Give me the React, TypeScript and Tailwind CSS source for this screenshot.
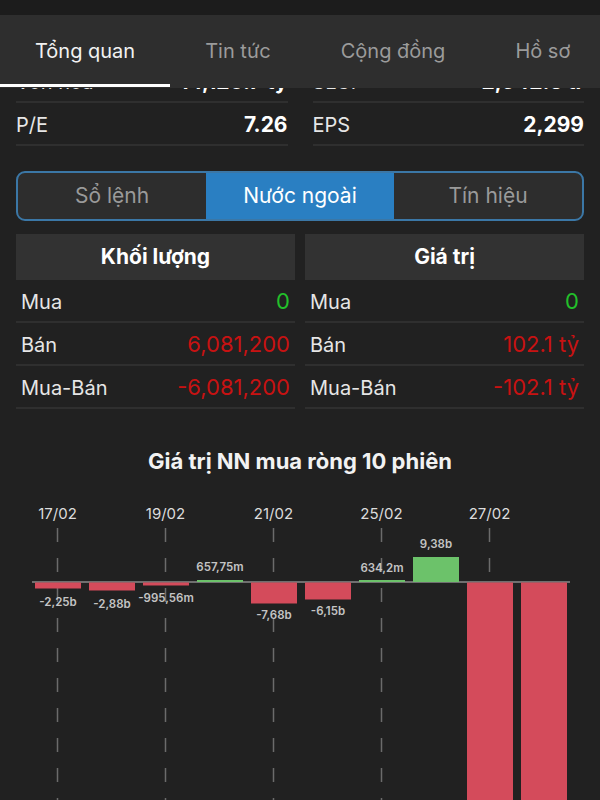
import React from "react";

const tabs = [
  { label: "Tổng quan", active: true },
  { label: "Tin tức" },
  { label: "Cộng đồng" },
  { label: "Hồ sơ" },
];

type Bar = { v: number; h: number; label: string; ly: number };

// local svg coords: svg top = 490, baseline at 92
const bars: Bar[] = [
  { v: -1, h: 6, label: "-2,25b", ly: 116 },
  { v: -1, h: 8, label: "-2,88b", ly: 118 },
  { v: -1, h: 3, label: "-995,56m", ly: 112 },
  { v: 1, h: 2, label: "657,75m", ly: 81 },
  { v: -1, h: 21, label: "-7,68b", ly: 129 },
  { v: -1, h: 17, label: "-6,15b", ly: 125 },
  { v: 1, h: 2, label: "634,2m", ly: 82 },
  { v: 1, h: 25, label: "9,38b", ly: 58 },
  { v: -1, h: 400, label: "", ly: 0 },
  { v: -1, h: 400, label: "", ly: 0 },
];

const ticks = [
  { x: 57.5, d: "17/02" },
  { x: 165.5, d: "19/02" },
  { x: 273.5, d: "21/02" },
  { x: 381.5, d: "25/02" },
  { x: 489.5, d: "27/02" },
];

function Chart() {
  const base = 92;
  return (
    <svg width="600" height="310" viewBox="0 0 600 310" className="block">
      {ticks.map((t) => (
        <g key={t.d}>
          <text
            x={t.x}
            y={29}
            textAnchor="middle"
            fontSize="15"
            fill="#dcdcdc"
            fontFamily="Inter, sans-serif"
          >
            {t.d}
          </text>
          <line
            x1={t.x}
            x2={t.x}
            y1={38}
            y2={310}
            stroke="#6b6b6b"
            strokeWidth="1.5"
            strokeDasharray="14 16"
          />
        </g>
      ))}
      <line x1="32" x2="570" y1={base} y2={base} stroke="#8a8a8a" strokeWidth="1.5" />
      {bars.map((b, i) => {
        const x = 35 + i * 54;
        const y = b.v > 0 ? base - b.h : base + 0.5;
        return (
          <g key={i}>
            <rect
              x={x}
              y={y}
              width={46}
              height={b.h}
              fill={b.v > 0 ? "#6cc26a" : "#d44b5b"}
            />
            {b.label && (
              <text
                x={x + 23}
                y={b.ly}
                textAnchor="middle"
                fontSize="11.5"
                fontWeight="600"
                fill="#c4c4c4"
                fontFamily="Inter, sans-serif"
              >
                {b.label}
              </text>
            )}
          </g>
        );
      })}
    </svg>
  );
}

function StatRow({ l, v }: { l: string; v: string }) {
  return (
    <div className="flex h-[43px] items-center justify-between border-b-2 border-[#2f2f2f] pt-[3px]">
      <span className="text-[20px] text-[#e6e6e6]">{l}</span>
      <span className="text-[21px] font-bold text-white">{v}</span>
    </div>
  );
}

function FRow({ l, v, c }: { l: string; v: string; c: string }) {
  return (
    <div className="flex h-[43px] items-center justify-between border-b-2 border-[#2f2f2f] px-[5px] pt-[2px]">
      <span className="text-[20px] text-[#e6e6e6]">{l}</span>
      <span className={`text-[22px] ${c}`}>{v}</span>
    </div>
  );
}

export default function App() {
  return (
    <div
      className="relative h-[800px] w-[600px] overflow-hidden bg-[#212121]"
      style={{ fontFamily: "Inter, 'Noto Sans', sans-serif" }}
    >
      {/* header overlay */}
      <div className="absolute left-0 right-0 top-0 z-10">
        <div className="h-[15px] bg-[#1c1c1c]" />
        <div className="relative flex h-[73px] items-center bg-[#2e2e2e]">
          {tabs.map((t) => (
            <div
              key={t.label}
              className="relative flex h-full shrink-0 items-center px-[35px] pb-[2px]"
            >
              <span
                className={`text-[20px] ${t.active ? "text-[#f2f2f2]" : "text-[#9b9b9b]"}`}
              >
                {t.label}
              </span>
              {t.active && (
                <div className="absolute bottom-[1px] left-0 right-0 h-[3px] bg-white" />
              )}
            </div>
          ))}
        </div>
      </div>

      {/* content */}
      <div className="pt-[60px]">
        <div className="grid grid-cols-2 gap-x-[25px] px-4">
          <StatRow l="Vốn hóa" v="14,120.7 tỷ" />
          <StatRow l="SLCP" v="2,942.5 tr" />
          <StatRow l="P/E" v="7.26" />
          <StatRow l="EPS" v="2,299" />
        </div>

        <div className="mx-4 mt-[25px] flex h-[50px] overflow-hidden rounded-[9px] border-2 border-[#3b77a6] bg-[#2d2d2d]">
          <div className="flex flex-1 items-center justify-center text-[21px] text-[#9a9a9a]">
            Sổ lệnh
          </div>
          <div className="flex flex-1 items-center justify-center bg-[#2a7fc2] text-[21px] text-white">
            Nước ngoài
          </div>
          <div className="flex flex-1 items-center justify-center text-[21px] text-[#9a9a9a]">
            Tín hiệu
          </div>
        </div>

        <div className="mt-[13px] grid grid-cols-2 gap-x-[10px] px-4">
          <div>
            <div className="flex h-[46px] items-center justify-center bg-[#323232] text-[21px] font-bold text-white">
              Khối lượng
            </div>
            <FRow l="Mua" v="0" c="text-[#22c02a]" />
            <FRow l="Bán" v="6,081,200" c="text-[#c81212]" />
            <FRow l="Mua-Bán" v="-6,081,200" c="text-[#c81212]" />
          </div>
          <div>
            <div className="flex h-[46px] items-center justify-center bg-[#323232] text-[21px] font-bold text-white">
              Giá trị
            </div>
            <FRow l="Mua" v="0" c="text-[#22c02a]" />
            <FRow l="Bán" v="102.1 tỷ" c="text-[#c81212]" />
            <FRow l="Mua-Bán" v="-102.1 tỷ" c="text-[#c81212]" />
          </div>
        </div>

        <div className="mt-[38px] flex h-[28px] items-center justify-center text-[22px] font-bold text-[#f2f2f2]">
          Giá trị NN mua ròng 10 phiên
        </div>

        <div className="mt-[15px]">
          <Chart />
        </div>
      </div>
    </div>
  );
}
